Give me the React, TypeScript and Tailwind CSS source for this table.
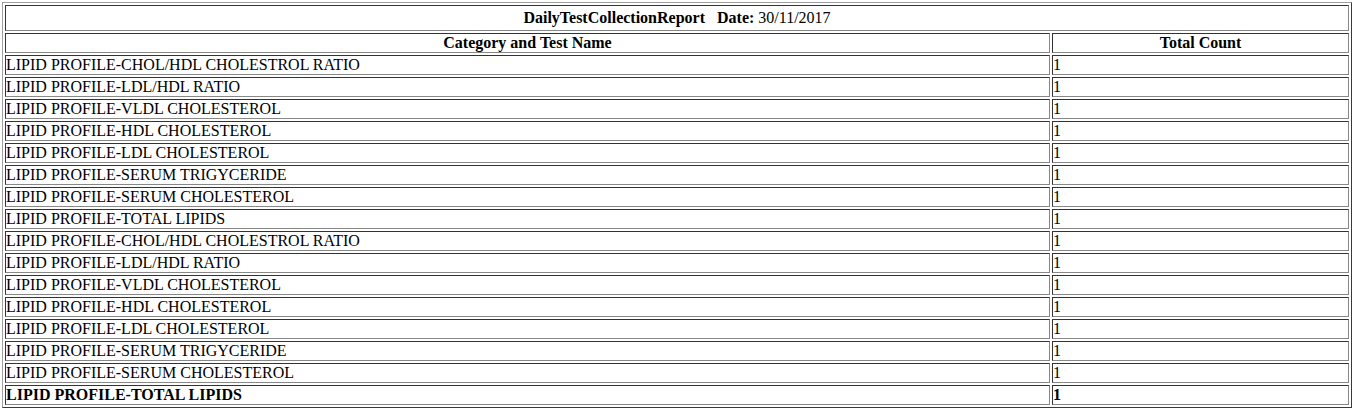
import React from "react";

const tests = [
  "LIPID PROFILE-CHOL/HDL CHOLESTROL RATIO",
  "LIPID PROFILE-LDL/HDL RATIO",
  "LIPID PROFILE-VLDL CHOLESTEROL",
  "LIPID PROFILE-HDL CHOLESTEROL",
  "LIPID PROFILE-LDL CHOLESTEROL",
  "LIPID PROFILE-SERUM TRIGYCERIDE",
  "LIPID PROFILE-SERUM CHOLESTEROL",
  "LIPID PROFILE-TOTAL LIPIDS",
  "LIPID PROFILE-CHOL/HDL CHOLESTROL RATIO",
  "LIPID PROFILE-LDL/HDL RATIO",
  "LIPID PROFILE-VLDL CHOLESTEROL",
  "LIPID PROFILE-HDL CHOLESTEROL",
  "LIPID PROFILE-LDL CHOLESTEROL",
  "LIPID PROFILE-SERUM TRIGYCERIDE",
  "LIPID PROFILE-SERUM CHOLESTEROL",
];

const cell =
  "border border-t-[#333333] border-l-[#333333] border-r-[#888888] border-b-[#888888] p-0 h-[20px] leading-[18px] align-middle";

export default function App() {
  return (
    <div className="bg-white w-[1358px] h-[414px] pt-[2px] pl-[2px] text-black text-[16px] font-['Liberation_Serif','Times_New_Roman',serif]">
      <table className="border-separate border-spacing-[2px] w-[1350px] border border-t-[#a0a0a0] border-l-[#a0a0a0] border-r-[#3a3a3a] border-b-[#3a3a3a]">
        <tbody>
          <tr>
            <td colSpan={2} className={`${cell} !h-[26px] text-center`}>
              <b>DailyTestCollectionReport</b>
              <span className="whitespace-pre">{"   "}</span>
              <b>Date:</b> 30/11/2017
            </td>
          </tr>
          <tr>
            <th className={`${cell} w-[1045px] text-center font-bold`}>Category and Test Name</th>
            <th className={`${cell} w-[297px] text-center font-bold`}>Total Count</th>
          </tr>
          {tests.map((t, i) => (
            <tr key={i}>
              <td className={`${cell} text-left`}>{t}</td>
              <td className={`${cell} text-left`}>1</td>
            </tr>
          ))}
          <tr>
            <td className={`${cell} text-left font-bold`}>LIPID PROFILE-TOTAL LIPIDS</td>
            <td className={`${cell} text-left font-bold`}>1</td>
          </tr>
        </tbody>
      </table>
    </div>
  );
}
